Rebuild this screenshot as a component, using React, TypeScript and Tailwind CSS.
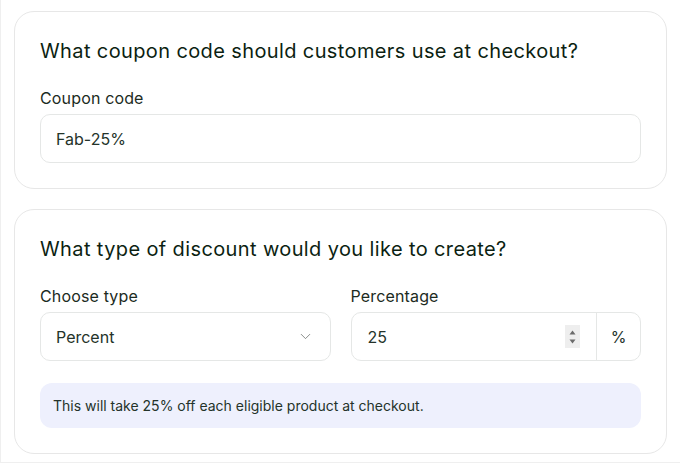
import { ChevronDown } from 'lucide-react';

export default function App() {
  return (
    <div className="w-[680px] h-[463px] bg-white border-l border-b border-[#efefef] pt-[11px] px-[13px] font-['Inter',sans-serif] text-[#13241a]">
      <div className="flex flex-col gap-[20px]">
        {/* Coupon code */}
        <div className="bg-white border border-[#e7e7e7] rounded-[20px] px-[25px] pt-[25px] pb-[25px]">
          <h2 className="text-[20px] leading-[28px] tracking-[0.38px] text-[#0c1f12]">
            What coupon code should customers use at checkout?
          </h2>
          <div className="mt-[22px]">
            <label className="block text-[16px] leading-[22px] tracking-[0.15px] text-[#1c2b22]">Coupon code</label>
            <div className="mt-[5px] h-[49px] border border-[#e5e7e6] rounded-[10px] flex items-center px-[15px] text-[16px] text-[#24332a]">
              Fab-25%
            </div>
          </div>
        </div>

        {/* Discount type */}
        <div className="bg-white border border-[#e7e7e7] rounded-[20px] px-[25px] pt-[25px] pb-[25px]">
          <h2 className="text-[20px] leading-[28px] tracking-[0.38px] text-[#0c1f12]">
            What type of discount would you like to create?
          </h2>
          <div className="mt-[22px] grid grid-cols-2 gap-[20px]">
            <div>
              <label className="block text-[16px] leading-[22px] tracking-[0.15px] text-[#1c2b22]">Choose type</label>
              <div className="mt-[5px] h-[49px] border border-[#e5e7e6] rounded-[10px] flex items-center justify-between pl-[15px] pr-[16px] text-[16px] text-[#24332a]">
                <span>Percent</span>
                <ChevronDown className="w-[17px] h-[17px] text-[#6f7471]" strokeWidth={1.15} />
              </div>
            </div>
            <div>
              <label className="block text-[16px] leading-[22px] tracking-[0.15px] text-[#1c2b22]">Percentage</label>
              <div className="mt-[5px] h-[49px] border border-[#e5e7e6] rounded-[10px] flex items-stretch text-[16px] text-[#24332a]">
                <div className="flex-1 flex items-center justify-between pl-[16px] pr-[16px]">
                  <span>25</span>
                  <div className="w-[15px] h-[23px] bg-[#eeeeee] flex flex-col items-center justify-center gap-[4px]">
                    <svg width="7" height="5" viewBox="0 0 7 5"><path d="M3.5 0.5 L6.5 4.5 L0.5 4.5 Z" fill="#6b6b6b" /></svg>
                    <svg width="7" height="5" viewBox="0 0 7 5"><path d="M0.5 0.5 L6.5 0.5 L3.5 4.5 Z" fill="#6b6b6b" /></svg>
                  </div>
                </div>
                <div className="w-[44px] border-l border-[#e5e7e6] flex items-center justify-center">%</div>
              </div>
            </div>
          </div>
          <div className="mt-[22px] h-[45px] rounded-[12px] bg-[#eef0fd] flex items-center px-[13px] text-[14px] text-[#24332a]">
            This will take 25% off each eligible product at checkout.
          </div>
        </div>
      </div>
    </div>
  );
}
